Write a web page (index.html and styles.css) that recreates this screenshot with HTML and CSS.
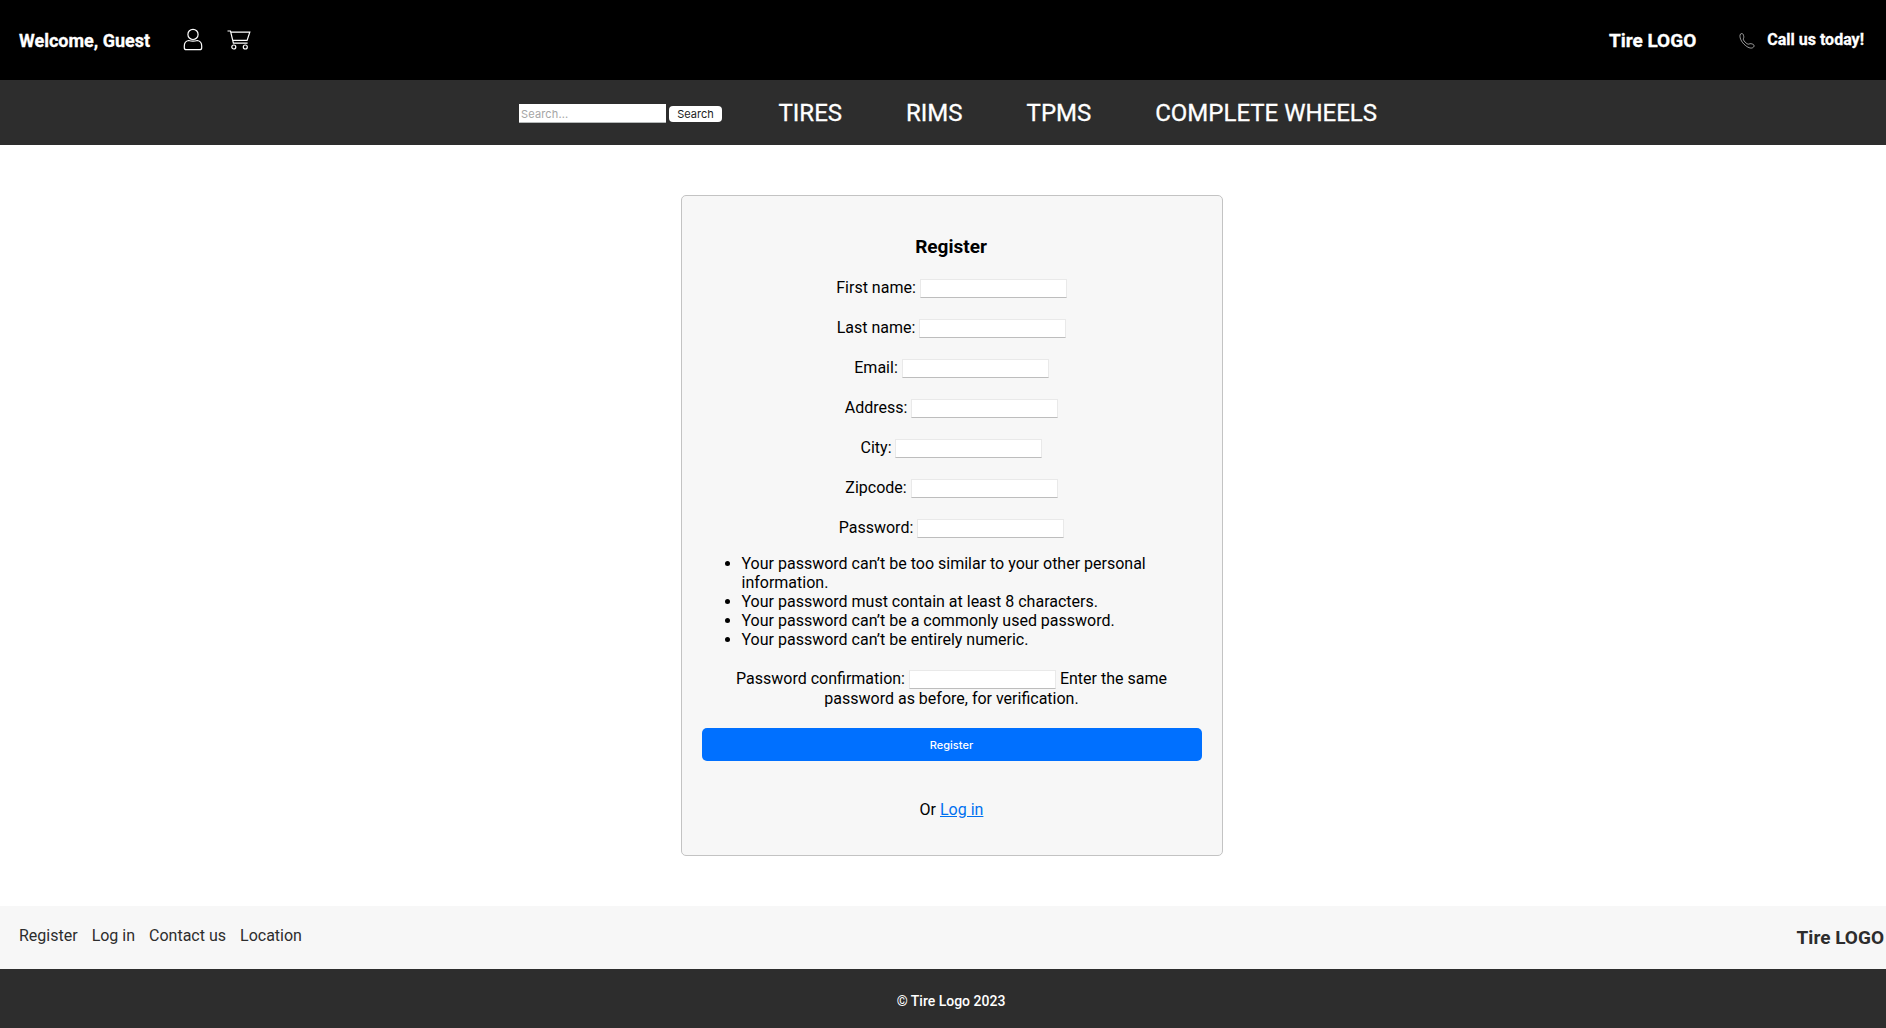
FILE: index.html
```html
<!DOCTYPE html>
<html lang="en">
<head>
<meta charset="utf-8">
<title>Register</title>
<link rel="stylesheet" href="styles.css">
</head>
<body>
<header class="topbar">
  <span class="welcome">Welcome, Guest</span>
  <svg class="icon-user" viewBox="0 0 20 24" width="20" height="24"><circle cx="10" cy="6.4" r="5.1"/><path d="M5.600 12.500C2.600 13 1.300 15 1.300 18v1.700c0 1.300.8 2 2 2h13.400c1.200 0 2-.7 2-2V18c0-3-1.300-5-4.300-5.500Q10 13.700 5.600 12.500z"/></svg>
  <svg class="icon-cart" viewBox="0 0 24 20" width="24" height="20"><path d="M.5 1h3L6.400 13.200h14.200M4.200 2.200h18.600l-2.700 8.200H6.200"/><circle cx="6.800" cy="17" r="2"/><circle cx="18.300" cy="17" r="2"/></svg>
  <span class="logo">Tire LOGO</span>
  <svg class="icon-phone" viewBox="0 0 16 16" width="16" height="16"><path d="M1.400 1.200C2.200.3 3.600.4 4.100 1.300c.6 1.300 1 3 .4 4-.7 1 .2 2.300 1.600 3.800s3 2.500 4 1.900c1.200-.7 3-.2 4.200.5 1 .6 1 1.800.2 2.600-1.500 1.700-4.700 1.200-8-1.600C2 9 0 3.700 1.400 1.200z"/></svg>
  <span class="call">Call us today!</span>
</header>
<nav class="nav">
  <form class="search"><input class="search-input" type="text" placeholder="Search..."><button class="search-button" type="button">Search</button></form>
  <a class="nav-link">TIRES</a>
  <a class="nav-link">RIMS</a>
  <a class="nav-link">TPMS</a>
  <a class="nav-link">COMPLETE WHEELS</a>
</nav>
<main class="main">
  <section class="card">
    <h3 class="title">Register</h3>
    <form>
      <p class="row"><label>First name:</label> <input class="field" type="text"></p>
      <p class="row"><label>Last name:</label> <input class="field" type="text"></p>
      <p class="row"><label>Email:</label> <input class="field" type="text"></p>
      <p class="row"><label>Address:</label> <input class="field" type="text"></p>
      <p class="row"><label>City:</label> <input class="field" type="text"></p>
      <p class="row"><label>Zipcode:</label> <input class="field" type="text"></p>
      <p class="row"><label>Password:</label> <input class="field" type="password"></p>
      <ul class="rules">
        <li>Your password can’t be too similar to your other personal information.</li>
        <li>Your password must contain at least 8 characters.</li>
        <li>Your password can’t be a commonly used password.</li>
        <li>Your password can’t be entirely numeric.</li>
      </ul>
      <p class="row confirm"><label>Password confirmation:</label> <input class="field" type="password"> Enter the same password as before, for verification.</p>
      <button class="submit" type="button">Register</button>
    </form>
    <p class="alt">Or <a class="login" href="#">Log in</a></p>
  </section>
</main>
<div class="links">
  <a>Register</a><a>Log in</a><a>Contact us</a><a>Location</a>
  <span class="footer-logo">Tire LOGO</span>
</div>
<footer class="copyright">© Tire Logo 2023</footer>
</body>
</html>
```
FILE: styles.css
```css
* { box-sizing: border-box; }
body {
  margin: 0;
  background: #fff;
  color: #000;
  font: 16px/19px Roboto, sans-serif;
}
svg { display: block; fill: none; stroke: #fff; stroke-width: 1.2; flex: none; }
.topbar {
  display: flex;
  align-items: center;
  height: 80px;
  padding: 0 22px 0 19px;
  background: #000;
  color: #fff;
  font-weight: 700;
  -webkit-text-stroke: .3px #fff;
}
.welcome { font-size: 18px; }
.icon-user { margin: -1px 0 0 33px; }
.icon-cart { margin-left: 24px; }
.logo { margin-left: auto; font-size: 19px; }
.icon-phone { margin: 1px 0 0 43px; stroke-width: .6; }
.call { margin: -1px 0 0 12px; }
.nav {
  display: flex;
  align-items: center;
  height: 65px;
  padding-left: 519px;
  background: #2d2d2d;
  color: #fff;
}
.search { display: flex; align-items: center; margin-right: 56.5px; padding-top: 1px; }
.search-input {
  width: 147px;
  height: 19px;
  padding: 2px 2px 0;
  border: 0;
  border-bottom: 1px solid #b5b9b9;
  font: 11px Inter, sans-serif;
  letter-spacing: .15px;
}
.search-input::placeholder { color: #a5a5a5; }
.search-button {
  width: 53px;
  height: 16px;
  margin: 1px 0 0 3px;
  padding: 0;
  border: 0;
  border-radius: 4px;
  background: #fff;
  color: #1c1c1c;
  font: 11px/16px Inter, sans-serif;
}
.nav-link {
  margin-right: 64px;
  font-size: 24px;
  line-height: 28px;
  -webkit-text-stroke: .3px #fff;
}
.main { padding: 50px 0; height: 761px; }
.card {
  width: 542px;
  height: 661px;
  margin-left: 681px;
  padding: 40px 20px 0;
  border: 1px solid #c3c3c3;
  border-radius: 5px;
  background: #f7f7f7;
  text-align: center;
}
.title { margin: 0 0 20px; padding-right: 2px; font-size: 19px; line-height: 22px; }
.row { height: 20px; margin: 0 0 20px; padding-right: 1px; line-height: 19px; }
.field {
  width: 147px;
  height: 19px;
  padding: 0;
  border: 1px solid #e9e9e9;
  border-bottom-color: #bdbdbd;
  font: 11px Inter, sans-serif;
  vertical-align: 1px;
}
.rules { margin: -4px 0 20px; padding-left: 39.500px; text-align: left; }
.confirm { height: 39px; padding: 0 30.5px 0 29.5px; }
.submit {
  display: block;
  width: 100%;
  height: 33px;
  padding: 0 7px 0 6px;
  border: 0;
  border-radius: 5px;
  background: #0070ff;
  color: #fff;
  font: 500 11px Inter, sans-serif;
}
.alt { margin: 39px 0 0; padding-right: 1px; }
.login { color: #0070f0; }
.links {
  display: flex;
  align-items: center;
  gap: 14px;
  height: 63px;
  padding: 0 2px 4px 19px;
  background: #f7f7f7;
  color: #2d2d2d;
}
.footer-logo { margin: 4px 0 0 auto; font-size: 19px; font-weight: 700; }
.copyright {
  height: 59px;
  padding: 23px 0 0 16px;
  background: #2d2d2d;
  color: #fff;
  font-size: 14px;
  font-weight: 500;
  text-align: center;
}
```
